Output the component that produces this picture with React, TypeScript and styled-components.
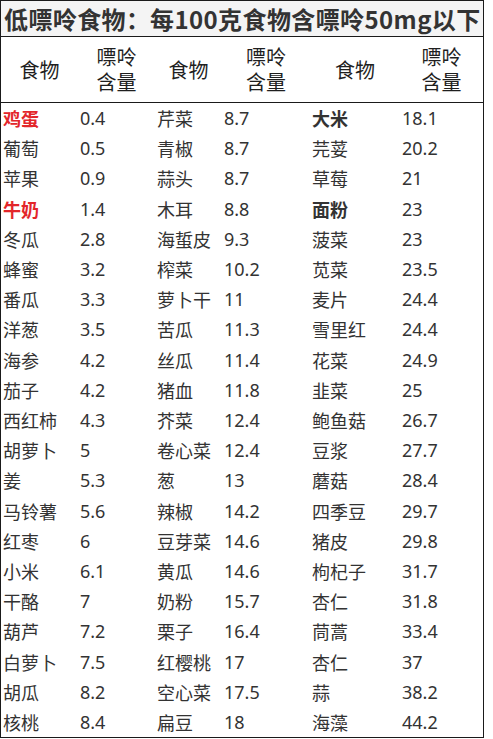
import React from 'react';
import styled, { createGlobalStyle } from 'styled-components';

const GlobalStyle = createGlobalStyle`
  html, body {
    margin: 0;
    padding: 0;
    background: #ffffff;
  }
  body {
    font-family: "Noto Sans", "Noto Sans CJK SC", sans-serif;
    color: #333333;
  }
`;

const COLUMNS = '77px 77px 67px 88px 90px 83px';

type Food = {
  name: string;
  value: string;
  tone?: 'red' | 'bold';
};

const col1: Food[] = [
  { name: '鸡蛋', value: '0.4', tone: 'red' },
  { name: '葡萄', value: '0.5' },
  { name: '苹果', value: '0.9' },
  { name: '牛奶', value: '1.4', tone: 'red' },
  { name: '冬瓜', value: '2.8' },
  { name: '蜂蜜', value: '3.2' },
  { name: '番瓜', value: '3.3' },
  { name: '洋葱', value: '3.5' },
  { name: '海参', value: '4.2' },
  { name: '茄子', value: '4.2' },
  { name: '西红柿', value: '4.3' },
  { name: '胡萝卜', value: '5' },
  { name: '姜', value: '5.3' },
  { name: '马铃薯', value: '5.6' },
  { name: '红枣', value: '6' },
  { name: '小米', value: '6.1' },
  { name: '干酪', value: '7' },
  { name: '葫芦', value: '7.2' },
  { name: '白萝卜', value: '7.5' },
  { name: '胡瓜', value: '8.2' },
  { name: '核桃', value: '8.4' },
];

const col2: Food[] = [
  { name: '芹菜', value: '8.7' },
  { name: '青椒', value: '8.7' },
  { name: '蒜头', value: '8.7' },
  { name: '木耳', value: '8.8' },
  { name: '海蜇皮', value: '9.3' },
  { name: '榨菜', value: '10.2' },
  { name: '萝卜干', value: '11' },
  { name: '苦瓜', value: '11.3' },
  { name: '丝瓜', value: '11.4' },
  { name: '猪血', value: '11.8' },
  { name: '芥菜', value: '12.4' },
  { name: '卷心菜', value: '12.4' },
  { name: '葱', value: '13' },
  { name: '辣椒', value: '14.2' },
  { name: '豆芽菜', value: '14.6' },
  { name: '黄瓜', value: '14.6' },
  { name: '奶粉', value: '15.7' },
  { name: '栗子', value: '16.4' },
  { name: '红樱桃', value: '17' },
  { name: '空心菜', value: '17.5' },
  { name: '扁豆', value: '18' },
];

const col3: Food[] = [
  { name: '大米', value: '18.1', tone: 'bold' },
  { name: '芫荽', value: '20.2' },
  { name: '草莓', value: '21' },
  { name: '面粉', value: '23', tone: 'bold' },
  { name: '菠菜', value: '23' },
  { name: '苋菜', value: '23.5' },
  { name: '麦片', value: '24.4' },
  { name: '雪里红', value: '24.4' },
  { name: '花菜', value: '24.9' },
  { name: '韭菜', value: '25' },
  { name: '鲍鱼菇', value: '26.7' },
  { name: '豆浆', value: '27.7' },
  { name: '蘑菇', value: '28.4' },
  { name: '四季豆', value: '29.7' },
  { name: '猪皮', value: '29.8' },
  { name: '枸杞子', value: '31.7' },
  { name: '杏仁', value: '31.8' },
  { name: '茼蒿', value: '33.4' },
  { name: '杏仁', value: '37' },
  { name: '蒜', value: '38.2' },
  { name: '海藻', value: '44.2' },
];

const Table = styled.div`
  width: 484px;
  height: 738px;
  box-sizing: border-box;
  border: 1px solid #1a1a1a;
  display: flex;
  flex-direction: column;
`;

const TitleRow = styled.div`
  height: 35px;
  flex: none;
  display: flex;
  align-items: center;
  padding-left: 3px;
  background: #f4f4f4;
  border-bottom: 1px solid #1a1a1a;
  font-family: "Noto Sans CJK SC", sans-serif;
  font-weight: 700;
  font-size: 24px;
  letter-spacing: 0.4px;
  color: #333333;
  white-space: nowrap;
  overflow: hidden;
`;

const Colon = styled.span`
  display: inline-block;
  width: 1em;
  text-align: center;
`;

const HeaderRow = styled.div`
  height: 65px;
  flex: none;
  display: grid;
  grid-template-columns: ${COLUMNS};
  border-bottom: 1px solid #1a1a1a;
`;

const HeaderCell = styled.div`
  display: flex;
  flex-direction: column;
  align-items: center;
  justify-content: center;
  gap: 1px;
  font-family: "Noto Sans CJK SC", sans-serif;
  font-size: 20px;
  color: #1f1f1f;
`;

const HeaderLine = styled.span`
  display: block;
  line-height: 24px;
  height: 24px;
`;

const Body = styled.div`
  flex: 1;
  display: grid;
  grid-template-columns: ${COLUMNS};
  grid-auto-rows: 1fr;
`;

const NameCell = styled.div<{ $tone?: 'red' | 'bold' }>`
  display: flex;
  align-items: center;
  padding-left: 2px;
  font-family: "Noto Sans CJK SC", sans-serif;
  font-size: 18px;
  white-space: nowrap;
  color: ${(p) => (p.$tone === 'red' ? '#e3262b' : '#333333')};
  font-weight: ${(p) => (p.$tone ? 700 : 400)};
`;

const ValueCell = styled.div`
  display: flex;
  align-items: center;
  padding-left: 2px;
  font-family: "Noto Sans", sans-serif;
  font-size: 18px;
  color: #333333;
  white-space: nowrap;
`;

const headers = [['食物'], ['嘌呤', '含量'], ['食物'], ['嘌呤', '含量'], ['食物'], ['嘌呤', '含量']];

export default function App() {
  return (
    <>
      <GlobalStyle />
      <Table>
        <TitleRow>
          低嘌呤食物<Colon>：</Colon>每100克食物含嘌呤50mg以下
        </TitleRow>
        <HeaderRow>
          {headers.map((lines, i) => (
            <HeaderCell key={i}>
              {lines.map((line, j) => (
                <HeaderLine key={j}>{line}</HeaderLine>
              ))}
            </HeaderCell>
          ))}
        </HeaderRow>
        <Body>
          {col1.map((_, i) =>
            [col1[i], col2[i], col3[i]].map((f, c) => (
              <React.Fragment key={`${i}-${c}`}>
                <NameCell $tone={f.tone}>{f.name}</NameCell>
                <ValueCell>{f.value}</ValueCell>
              </React.Fragment>
            ))
          )}
        </Body>
      </Table>
    </>
  );
}
